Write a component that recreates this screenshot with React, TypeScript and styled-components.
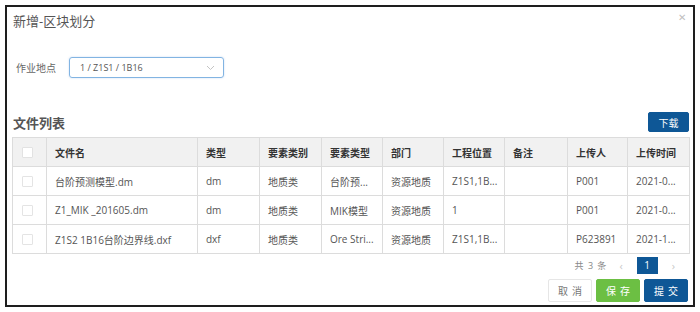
import React from "react";
import styled, { createGlobalStyle } from "styled-components";

const Global = createGlobalStyle`
  html, body {
    margin: 0;
    padding: 0;
    background: #fff;
    font-family: "Open Sans", "Noto Sans CJK SC", sans-serif;
  }
`;

const Frame = styled.div`
  margin: 5px;
  width: 690px;
  height: 302px;
  box-sizing: border-box;
  border: 2px solid #1e1e1e;
  padding: 0 4px 0 5px;
  display: flex;
  flex-direction: column;
  background: #fff;
`;

const Header = styled.div`
  height: 26px;
  display: flex;
  align-items: center;
  justify-content: space-between;
`;

const Title = styled.div`
  font-size: 13px;
  color: #555;
  padding-left: 1px;
`;

const Close = styled.span`
  font-size: 10px;
  color: #c0c0c0;
  margin-right: 3px;
  margin-top: -6px;
`;

const FormRow = styled.div`
  margin-top: 24px;
  display: flex;
  align-items: center;
  height: 21px;
`;

const Label = styled.span`
  font-size: 10px;
  color: #666;
  flex: 0 0 57px;
  padding-left: 4px;
  box-sizing: border-box;
`;

const Select = styled.div`
  width: 155px;
  height: 21px;
  box-sizing: border-box;
  border: 1px solid #82b4e2;
  border-radius: 3px;
  box-shadow: 0 0 2px rgba(90, 150, 220, 0.35);
  display: flex;
  align-items: center;
  justify-content: space-between;
  padding: 0 8px 0 10px;
  font-size: 9px;
  color: #555;
`;

const Section = styled.div`
  margin-top: 34px;
  height: 20px;
  display: flex;
  align-items: center;
  justify-content: space-between;
`;

const SectionTitle = styled.div`
  font-size: 13px;
  font-weight: 700;
  color: #555;
  padding-left: 1px;
`;

const Btn = styled.button<{ $kind: "blue" | "green" | "plain"; $w: number; $h: number }>`
  width: ${(p) => p.$w}px;
  height: ${(p) => p.$h}px;
  box-sizing: border-box;
  font-family: inherit;
  font-size: 10px;
  letter-spacing: ${(p) => (p.$h > 21 ? "4px" : "0")};
  text-indent: ${(p) => (p.$h > 21 ? "4px" : "0")};
  padding: 0;
  border-radius: 2px;
  cursor: pointer;
  border: 1px solid
    ${(p) => (p.$kind === "blue" ? "#0e5796" : p.$kind === "green" ? "#6cbf43" : "#e6e6e6")};
  background: ${(p) => (p.$kind === "blue" ? "#0e5796" : p.$kind === "green" ? "#6cbf43" : "#fff")};
  color: ${(p) => (p.$kind === "plain" ? "#777" : "#fff")};
`;

const Table = styled.table`
  margin-top: 5px;
  width: 677px;
  border-collapse: collapse;
  table-layout: fixed;
  font-size: 10px;
`;

const Th = styled.th`
  height: 28px;
  background: #f1f1f1;
  border: 1px solid #dcdcdc;
  text-align: left;
  padding: 0 8px;
  font-weight: 700;
  color: #333;
  white-space: nowrap;
  overflow: hidden;
`;

const Td = styled.td`
  height: 28px;
  border: 1px solid #dcdcdc;
  padding: 0 8px;
  color: #555;
  white-space: nowrap;
  overflow: hidden;
`;

const Check = styled.span<{ $head?: boolean }>`
  display: block;
  width: 9px;
  height: 9px;
  margin-left: 1px;
  border: 1px solid ${(p) => (p.$head ? "#e2e2e2" : "#e4e4e4")};
  background: #fff;
  border-radius: 1px;
`;

const Pager = styled.div`
  margin-top: 2px;
  height: 18px;
  display: flex;
  align-items: center;
  justify-content: flex-end;
  padding-right: 14px;
  font-size: 9px;
  color: #888;
`;

const Total = styled.span`
  margin-right: 12px;
  letter-spacing: 1px;
`;

const Arrow = styled.span`
  color: #c8c8c8;
  font-size: 11px;
`;

const Page = styled.span`
  width: 21px;
  height: 17px;
  margin: 0 14px;
  background: #0e5796;
  color: #fff;
  font-size: 10px;
  display: flex;
  align-items: center;
  justify-content: center;
`;

const Footer = styled.div`
  margin-top: 5px;
  display: flex;
  justify-content: flex-end;
  gap: 4px;
  padding-right: 1px;
`;

const cols = [34, 151, 62, 62, 61, 61, 61, 63, 60, 62];
const heads = ["文件名", "类型", "要素类别", "要素类型", "部门", "工程位置", "备注", "上传人", "上传时间"];
const rows = [
  ["台阶预测模型.dm", "dm", "地质类", "台阶预...", "资源地质", "Z1S1,1B...", "", "P001", "2021-0..."],
  ["Z1_MIK _201605.dm", "dm", "地质类", "MIK模型", "资源地质", "1", "", "P001", "2021-0..."],
  ["Z1S2 1B16台阶边界线.dxf", "dxf", "地质类", "Ore Stri...", "资源地质", "Z1S1,1B...", "", "P623891", "2021-1..."],
];

export default function App() {
  return (
    <>
      <Global />
      <Frame>
        <Header>
          <Title>新增-区块划分</Title>
          <Close>✕</Close>
        </Header>
        <FormRow>
          <Label>作业地点</Label>
          <Select>
            <span>1 / Z1S1 / 1B16</span>
            <svg width="9" height="6" viewBox="0 0 9 6">
              <path d="M1 1 L4.5 4.5 L8 1" fill="none" stroke="#c4c4c4" strokeWidth="1" />
            </svg>
          </Select>
        </FormRow>
        <Section>
          <SectionTitle>文件列表</SectionTitle>
          <Btn $kind="blue" $w={41} $h={20}>下载</Btn>
        </Section>
        <Table>
          <colgroup>
            {cols.map((w, i) => (
              <col key={i} style={{ width: w }} />
            ))}
          </colgroup>
          <thead>
            <tr>
              <Th>
                <Check $head />
              </Th>
              {heads.map((h) => (
                <Th key={h}>{h}</Th>
              ))}
            </tr>
          </thead>
          <tbody>
            {rows.map((r, i) => (
              <tr key={i}>
                <Td>
                  <Check />
                </Td>
                {r.map((c, j) => (
                  <Td key={j}>{c}</Td>
                ))}
              </tr>
            ))}
          </tbody>
        </Table>
        <Pager>
          <Total>共 3 条</Total>
          <Arrow>‹</Arrow>
          <Page>1</Page>
          <Arrow>›</Arrow>
        </Pager>
        <Footer>
          <Btn $kind="plain" $w={44} $h={23}>取消</Btn>
          <Btn $kind="green" $w={44} $h={23}>保存</Btn>
          <Btn $kind="blue" $w={44} $h={23}>提交</Btn>
        </Footer>
      </Frame>
    </>
  );
}
